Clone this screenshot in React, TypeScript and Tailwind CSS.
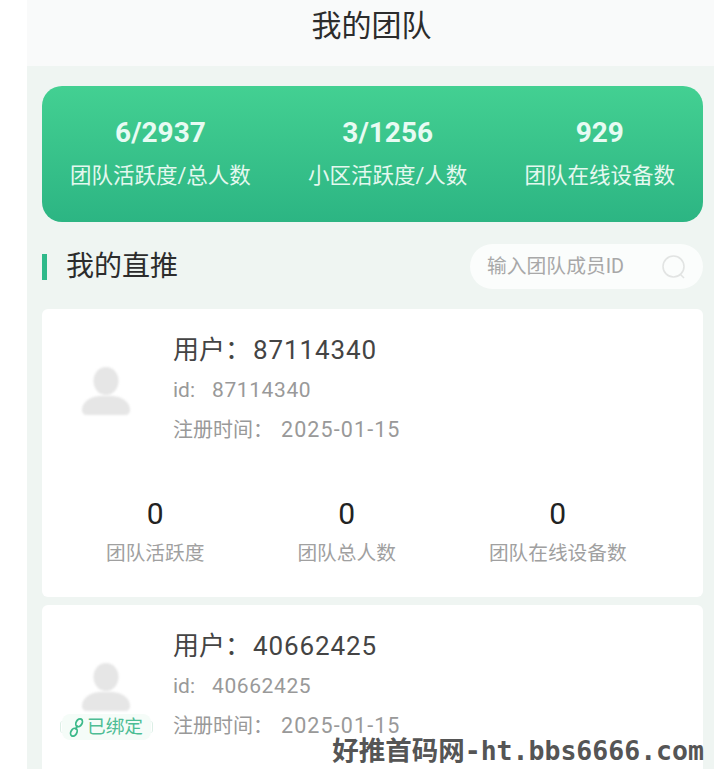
import React from "react";

const cjk = "font-['Roboto','Noto_Sans_CJK_SC',sans-serif]";

const Avatar: React.FC = () => (
  <svg width="48" height="50" viewBox="0 0 48 50" className="blur-[1px]">
    <ellipse cx="24" cy="15" rx="12.5" ry="14" fill="#e6e6e6" />
    <path d="M0 44c0-9 9-13 17-14h14c8 1 17 5 17 14 0 3-2 5-5 5H5c-3 0-5-2-5-5z" fill="#e6e6e6" />
  </svg>
);

const BoundBadge: React.FC = () => (
  <div className="absolute left-[18px] top-[109px] flex h-[26px] w-[93px] items-center justify-center">
    <span className="absolute left-0 h-[12px] w-[3px] rounded-l-full border-l border-[#dcefe6]" />
    <div className="flex h-[26px] items-center gap-[3px] rounded-lg bg-[#f5fcf8] pl-[7px] pr-[8px]">
      <svg width="15" height="21" viewBox="0 0 14 20" fill="none" stroke="#3cb98a" strokeWidth="1.7">
        <ellipse cx="9.5" cy="5.5" rx="2.8" ry="4" transform="rotate(30 9.5 5.5)" />
        <ellipse cx="4.5" cy="14.5" rx="2.8" ry="4" transform="rotate(30 4.5 14.5)" />
        <path d="M8 8l-2 4" />
      </svg>
      <span className="text-[18.7px] leading-none text-[#4dbd94]">已绑定</span>
    </div>
    <span className="absolute right-0 h-[12px] w-[3px] rounded-r-full border-r border-[#dcefe6]" />
  </div>
);

const MemberCard: React.FC<{ id: string; bound?: boolean; showStats?: boolean }> = ({ id, bound, showStats }) => (
  <div className="relative h-[288px] shrink-0 rounded-md bg-white">
    <div className="flex pl-[40px] pt-[23px]">
      <div className="mt-[34px] w-[91px] shrink-0">
        <Avatar />
      </div>
      <div>
        <div className="flex h-[36px] items-center text-[26px] text-[#444444]">
          <span>用户：</span>
          <span className="ml-[2px] tracking-[0.9px]">{id}</span>
        </div>
        <div className="mt-[7px] flex h-[32px] items-center text-[21px] text-[#999999]">
          <span className="w-[39px]">id:</span>
          <span className="tracking-[0.6px]">{id}</span>
        </div>
        <div className="mt-[7px] flex h-[32px] items-center text-[20px] text-[#999999]">
          <span>注册时间：</span>
          <span className="ml-[8px] text-[21.5px] tracking-[1.1px]">2025-01-15</span>
        </div>
      </div>
    </div>
    {bound && <BoundBadge />}
    {/* second card's numbers sit below the fold */}
    {showStats && (
      <div className="mt-[50px] flex gap-[93px] pl-[64px]">
        {["团队活跃度", "团队总人数", "团队在线设备数"].map((label) => (
          <div key={label} className="flex flex-col items-center">
            <span className="h-[36px] text-[30px] leading-[36px] text-[#222222]">0</span>
            <span className="mt-[8px] text-[19.7px] leading-[28px] text-[#a0a0a0]">{label}</span>
          </div>
        ))}
      </div>
    )}
  </div>
);

const App: React.FC = () => {
  const stats = [
    { value: "6/2937", label: "团队活跃度/总人数" },
    { value: "3/1256", label: "小区活跃度/人数" },
    { value: "929", label: "团队在线设备数" },
  ];

  return (
    <div className={`relative h-[769px] w-[714px] overflow-hidden bg-white pl-[27px] ${cjk}`}>
      {/* Header */}
      <div className="flex h-[66px] items-center justify-center bg-[#f9fafa] pb-[16px] pl-[2px] text-[30px] text-[#2c2c2c]">
        我的团队
      </div>

      <div className="flex h-[703px] flex-col bg-[#eff5f2] pl-[15px] pr-[11px] pt-[20px]">
        {/* Summary */}
        <div className="flex h-[136px] shrink-0 justify-between rounded-[20px] bg-gradient-to-b from-[#43d092] to-[#2cb583] px-[28px] pt-[28px]">
          {stats.map((s) => (
            <div key={s.label} className="flex flex-col items-center text-white">
              <span className="text-[28px] font-bold leading-[38px] text-[#e8fbf3]">{s.value}</span>
              <span className="mt-[8px] text-[21.5px] leading-[32px] text-[#e4f8ef]">{s.label}</span>
            </div>
          ))}
        </div>

        {/* Section title + search */}
        <div className="mt-[22px] flex h-[45px] shrink-0 items-center justify-between">
          <div className="flex items-center">
            <div className="h-[26px] w-[5px] bg-[#2fb98a]" />
            <span className="ml-[19px] text-[28px] text-[#2c2c2c]">我的直推</span>
          </div>
          <div className="flex h-[45px] w-[233px] items-center justify-between rounded-full bg-[#fbfdfc] pl-[17px] pr-[16px]">
            <span className="text-[19.8px] text-[#a8a8a8]">输入团队成员ID</span>
            <svg width="26" height="26" viewBox="0 0 26 26" fill="none" stroke="#e2e4e3" strokeWidth="1.6">
              <circle cx="12.5" cy="12.5" r="10.5" />
              <path d="M19 20l4 4" />
            </svg>
          </div>
        </div>

        <div className="mt-[20px] flex flex-col gap-[8px]">
          <MemberCard id="87114340" showStats />
          <MemberCard id="40662425" bound />
        </div>
      </div>

      {/* Watermark */}
      <div className="absolute right-[10px] top-[733px] flex items-center font-['DejaVu_Sans_Mono','Noto_Sans_CJK_SC',monospace] text-[26.5px] font-bold leading-[36px] text-[#555555]">
        好推首码网-ht.bbs6666.com
      </div>
    </div>
  );
};

export default App;
